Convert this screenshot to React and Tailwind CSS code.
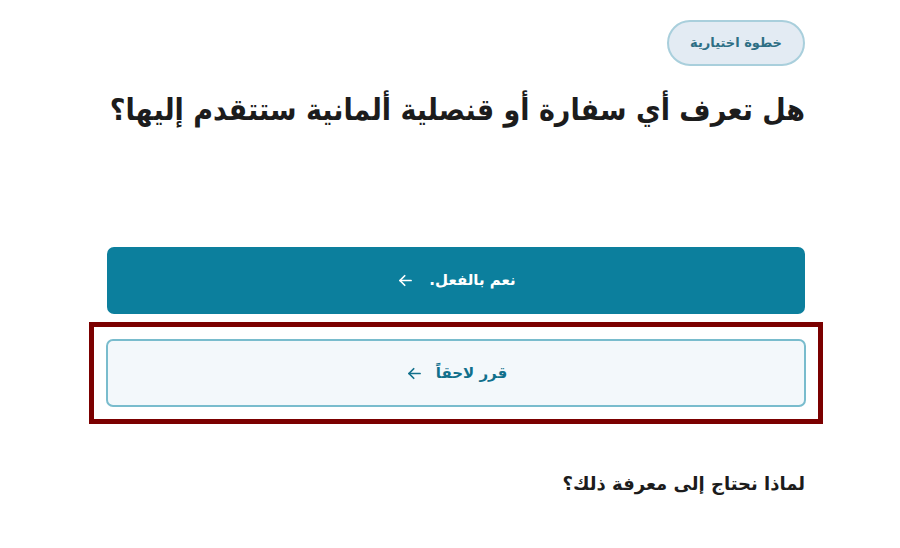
import React from 'react';

const Arrow = ({ className }) => (
  <svg viewBox="0 0 24 24" className={className} fill="none" stroke="currentColor" strokeWidth="2.2" strokeLinecap="round" strokeLinejoin="round">
    <path d="M19 12H5" />
    <path d="M11 6l-6 6 6 6" />
  </svg>
);

export default function App() {
  return (
    <div dir="rtl" className="min-h-[548px] bg-white" style={{ fontFamily: '"DejaVu Sans", "Noto Sans", sans-serif' }}>
      <div className="w-[698px] mr-[95px] pt-[20px]">
        {/* badge */}
        <div className="flex">
          <span className="h-[46px] w-[138px] rounded-full border-2 border-[#a9cfdc] bg-[#e3ebf3] text-[#2e6f85] text-[13px] font-bold flex items-center justify-center">
            خطوة اختيارية
          </span>
        </div>

        <h1
          className="mt-[24px] text-[30px] leading-[40px] font-bold text-[#1c1c1c] whitespace-nowrap"
          style={{ fontFamily: '"DejaVu Sans Condensed", "DejaVu Sans", sans-serif' }}
        >
          هل تعرف أي سفارة أو قنصلية ألمانية ستتقدم إليها؟
        </h1>

        <div className="mt-[117px] flex flex-col gap-[8px]">
          <button className="h-[67px] w-full rounded-[7px] bg-[#0c7f9d] text-white text-[15px] font-bold flex items-center justify-center gap-[14px]">
            <span>نعم بالفعل.</span>
            <Arrow className="w-[19px] h-[19px]" />
          </button>

          {/* highlighted option */}
          <div className="-mx-[18px] border-[5px] border-[#7b0000] px-[12px] py-[12px]">
            <button className="h-[68px] w-full rounded-[7px] border-2 border-[#79bccd] bg-[#f3f8fb] text-[#11708c] text-[15px] font-bold flex items-center justify-center gap-[12px]">
              <span>قرر لاحقاً</span>
              <Arrow className="w-[19px] h-[19px]" />
            </button>
          </div>
        </div>

        <p className="mt-[46px] text-[18px] font-bold text-[#1c1c1c]">
          لماذا نحتاج إلى معرفة ذلك؟
        </p>
      </div>
    </div>
  );
}
